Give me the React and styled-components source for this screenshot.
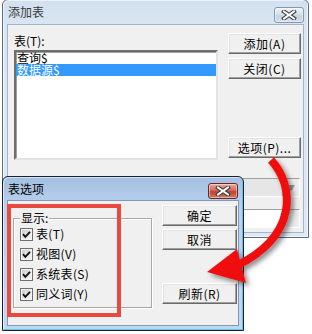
import styled, { createGlobalStyle } from 'styled-components';

const GlobalStyle = createGlobalStyle`
  html, body {
    margin: 0;
    padding: 0;
    background: #fff;
  }
  body {
    font-family: "Noto Sans CJK SC", "Liberation Sans", sans-serif;
    font-size: 12px;
    color: #000;
  }
`;

const Desktop = styled.div`
  position: relative;
  width: 312px;
  height: 334px;
  overflow: hidden;
  background: #fff;
`;

// windows sit on a free canvas, so they get their place from props
const Window = styled.div`
  position: absolute;
  left: ${({ $left }) => $left}px;
  top: ${({ $top }) => $top}px;
  width: ${({ $width }) => $width}px;
  height: ${({ $height }) => $height}px;
  box-sizing: border-box;
  display: flex;
  flex-direction: column;
  padding: 0 4px 4px;
  border: 1px solid ${({ $active }) => ($active ? '#18222e' : '#606c7a')};
  border-radius: 6px 6px 0 0;
  background: ${({ $active }) =>
    $active
      ? 'linear-gradient(#a3bfe2, #b9d1ec 30px, #c2d8ef)'
      : 'linear-gradient(#d2e0ef, #dae6f3 30px, #dfe9f5)'};
  box-shadow: inset 1px 1px rgba(255, 255, 255, 0.55),
    inset -1px -1px ${({ $active }) => ($active ? '#5ec4ec' : 'rgba(255,255,255,0.55)')};
`;

const TitleBar = styled.div`
  height: ${({ $h }) => $h}px;
  display: flex;
  align-items: center;
  justify-content: space-between;
  padding: 0 0 0 1px;
  flex-shrink: 0;
`;

const TitleText = styled.span`
  font-size: 12px;
  line-height: 14px;
  color: ${({ $active }) => ($active ? '#000' : '#3a3a3a')};
`;

const CloseButton = styled.div`
  width: 30px;
  height: 16px;
  box-sizing: border-box;
  margin-right: ${({ $mr }) => $mr}px;
  margin-top: ${({ $mt }) => $mt}px;
  border-radius: 3px;
  border: 1px solid ${({ $active }) => ($active ? '#6a2820' : '#8796aa')};
  background: ${({ $active }) =>
    $active
      ? 'linear-gradient(#e9a99e, #d4695c 45%, #bf3f30 55%, #d37a68)'
      : 'linear-gradient(#eef3f8, #d6e0eb 45%, #c6d3e2 55%, #d4deea)'};
  box-shadow: inset 0 0 0 1px rgba(255, 255, 255, 0.45);
  display: flex;
  align-items: center;
  justify-content: center;
`;

const Client = styled.div`
  flex: 1;
  background: #f0f0f0;
  border: 1px solid ${({ $active }) => ($active ? '#8199b8' : '#a5b4c6')};
  display: flex;
  flex-direction: ${({ $dir }) => $dir || 'row'};
  padding: ${({ $pad }) => $pad};
  overflow: hidden;
`;

const TopRow = styled.div`
  display: flex;
`;

const LeftCol = styled.div`
  display: flex;
  flex-direction: column;
`;

const FieldLabel = styled.div`
  height: 17px;
  line-height: 14px;
  padding-top: 1px;
  box-sizing: border-box;
`;

const ListBox = styled.div`
  width: 204px;
  height: 110px;
  box-sizing: border-box;
  background: #fff;
  border-style: solid;
  border-width: 2px;
  border-color: #6d6d6d #e3e3e3 #e3e3e3 #6d6d6d;
  box-shadow: inset 1px 1px #a0a0a0;
`;

const ListItem = styled.div`
  height: 12px;
  line-height: 12px;
  padding-left: 1px;
  white-space: nowrap;
  background: ${({ $selected }) => ($selected ? '#3399ff' : 'transparent')};
  color: ${({ $selected }) => ($selected ? '#fff' : '#000')};
`;

const ButtonCol = styled.div`
  display: flex;
  flex-direction: column;
  gap: ${({ $gap }) => $gap}px;
  margin-left: ${({ $ml }) => $ml}px;
  padding-top: ${({ $pt }) => $pt}px;
  padding-bottom: ${({ $pb }) => $pb || 0}px;
`;

const Button = styled.div`
  width: ${({ $w }) => $w}px;
  height: 21px;
  box-sizing: border-box;
  display: flex;
  align-items: center;
  justify-content: center;
  background: #f0f0f0;
  border-style: solid;
  border-width: 1px;
  border-color: #fff #696969 #696969 #fff;
  box-shadow: inset -1px -1px #a0a0a0, inset 1px 1px #e3e3e3;
  margin-top: ${({ $mt }) => ($mt === 'auto' ? 'auto' : `${$mt || 0}px`)};
  line-height: 14px;
  letter-spacing: 0.5px;
  white-space: nowrap;
`;

const Combo = styled.div`
  display: flex;
  width: 200px;
  height: 19px;
  box-sizing: border-box;
  margin-left: 86px;
  margin-top: ${({ $mt }) => $mt}px;
  border-style: solid;
  border-width: 1px;
  border-color: #a0a0a0 #fff #fff #a0a0a0;
  background: ${({ $disabled }) => ($disabled ? '#e6e6e6' : '#fff')};
`;

const ComboField = styled.div`
  flex: 1;
`;

const ComboArrow = styled.div`
  width: 16px;
  display: flex;
  align-items: center;
  justify-content: center;
  background: #ececec;
  border-left: 1px solid #b5b5b5;
  color: #9a9a9a;
  font-size: 8px;
`;

const GroupBox = styled.div`
  position: relative;
  width: 139px;
  height: 90px;
  box-sizing: border-box;
  margin: 17px 0 0 5px;
  border: 1px solid #a8a8a8;
  box-shadow: inset 1px 1px #fff, 1px 1px #fff;
  padding: 5px 0 0 6px;
  display: flex;
  flex-direction: column;
`;

const GroupLabel = styled.span`
  position: absolute;
  left: 6px;
  top: -8px;
  padding: 0 1px;
  background: #f0f0f0;
  line-height: 14px;
`;

const CheckRow = styled.label`
  height: 20px;
  display: flex;
  align-items: center;
  gap: 3px;
  line-height: 14px;
  letter-spacing: 0.3px;
`;

const CheckBox = styled.span`
  width: 13px;
  height: 13px;
  box-sizing: border-box;
  border: 1px solid #6f6f6f;
  background: linear-gradient(135deg, #c9c9c9, #ececec 70%, #f6f6f6);
  box-shadow: inset 0 0 0 1px #f4f4f4;
  display: flex;
  align-items: center;
  justify-content: center;
`;

const RedFrame = styled.div`
  position: absolute;
  left: 7px;
  top: 204px;
  width: 114px;
  height: 113px;
  box-sizing: border-box;
  border: 4px solid #e84a40;
  pointer-events: none;
`;

const ArrowLayer = styled.svg`
  position: absolute;
  left: 0;
  top: 0;
  pointer-events: none;
`;

const CloseGlyph = () => (
  <svg width="16" height="10" viewBox="0 0 16 10">
    <g strokeLinecap="square">
      <path d="M3 1.5 L13 8.5 M13 1.5 L3 8.5" stroke="#3b3b3b" strokeWidth="4" />
      <path d="M3 1.5 L13 8.5 M13 1.5 L3 8.5" stroke="#fff" strokeWidth="2" />
    </g>
  </svg>
);

const Check = () => (
  <svg width="9" height="9" viewBox="0 0 9 9">
    <polyline points="1,4.2 3.3,6.8 8,1.8" fill="none" stroke="#111" strokeWidth="1.9" />
  </svg>
);

const options = ['表(T)', '视图(V)', '系统表(S)', '同义词(Y)'];

export default function App() {
  return (
    <Desktop>
      <GlobalStyle />

      <Window $left={2} $top={-1} $width={307} $height={239}>
        <TitleBar $h={24}>
          <TitleText>添加表</TitleText>
          <CloseButton $mr={0} $mt={5}>
            <CloseGlyph />
          </CloseButton>
        </TitleBar>
        <Client $dir="column" $pad="8px 0 0 6px">
          <TopRow>
            <LeftCol>
              <FieldLabel>表(T):</FieldLabel>
              <ListBox>
                <ListItem>查询$</ListItem>
                <ListItem $selected>数据源$</ListItem>
              </ListBox>
            </LeftCol>
            <ButtonCol $gap={4} $ml={10} $pt={0} $pb={2}>
              <Button $w={73}>添加(A)</Button>
              <Button $w={73}>关闭(C)</Button>
              <Button $w={73} $mt="auto">选项(P)...</Button>
            </ButtonCol>
          </TopRow>
          <Combo $mt={18} $disabled>
            <ComboField />
            <ComboArrow>▼</ComboArrow>
          </Combo>
          <Combo $mt={12}>
            <ComboField />
            <ComboArrow />
          </Combo>
        </Client>
      </Window>

      <Window $active $left={2} $top={176} $width={242} $height={155}>
        <TitleBar $h={23}>
          <TitleText $active>表选项</TitleText>
          <CloseButton $active $mr={1} $mt={4}>
            <CloseGlyph />
          </CloseButton>
        </TitleBar>
        <Client $active $pad="0">
          <GroupBox>
            <GroupLabel>显示:</GroupLabel>
            {options.map((o) => (
              <CheckRow key={o}>
                <CheckBox>
                  <Check />
                </CheckBox>
                {o}
              </CheckRow>
            ))}
          </GroupBox>
          <ButtonCol $gap={3} $ml={10} $pt={4}>
            <Button $w={75}>确定</Button>
            <Button $w={75}>取消</Button>
            <Button $w={75} $mt={30}>刷新(R)</Button>
          </ButtonCol>
        </Client>
      </Window>

      <RedFrame />

      <ArrowLayer width="312" height="334" viewBox="0 0 312 334">
        <defs>
          <filter id="arrowShadow" x="-20%" y="-20%" width="150%" height="150%">
            <feDropShadow dx="3" dy="3" stdDeviation="2.5" floodColor="#000" floodOpacity="0.45" />
          </filter>
        </defs>
        <g filter="url(#arrowShadow)">
          <path d="M271 160 C 295 186, 298 236, 236 266" fill="none" stroke="#f01010" strokeWidth="8" />
          <polygon points="207,272 237,249 246,283" fill="#f01010" />
        </g>
      </ArrowLayer>
    </Desktop>
  );
}
